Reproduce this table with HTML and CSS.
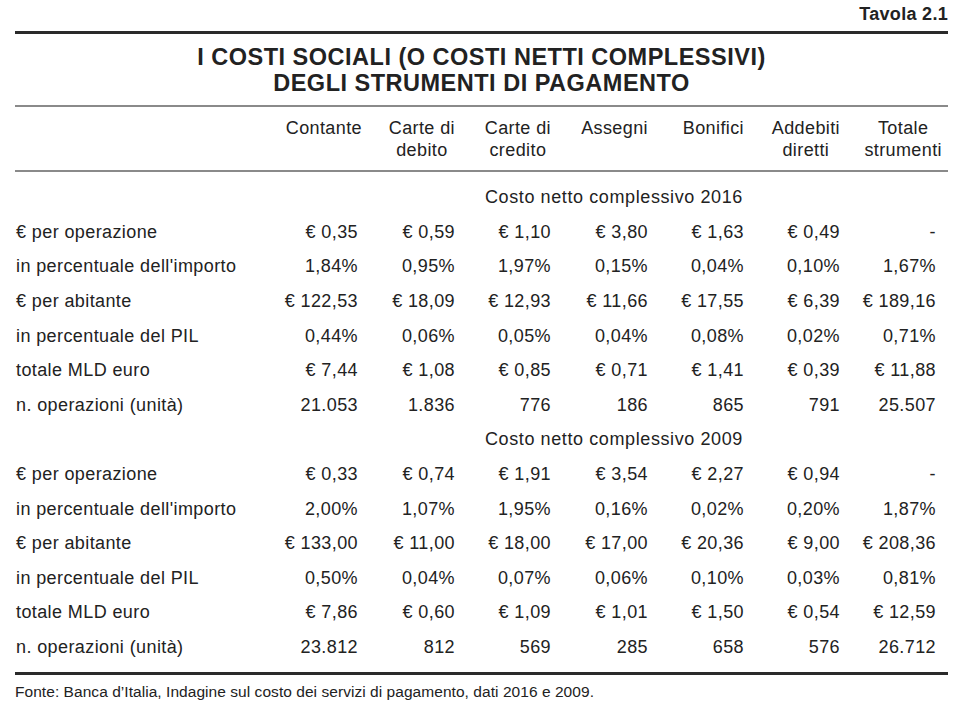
FILE: index.html
```html
<!DOCTYPE html>
<html lang="it">
<head>
<meta charset="utf-8">
<title>Tavola 2.1</title>
<link rel="stylesheet" href="styles.css">
</head>
<body>
<div class="page">
  <div class="tag">Tavola 2.1</div>
  <div class="rule-thick"></div>
  <h1 class="title">I COSTI SOCIALI (O COSTI NETTI COMPLESSIVI)<br>DEGLI STRUMENTI DI PAGAMENTO</h1>
  <div class="rule-thin"></div>
  <table class="data">
    <colgroup>
      <col class="c-label">
      <col class="c-num"><col class="c-num2"><col class="c-num"><col class="c-num2"><col class="c-num"><col class="c-num"><col class="c-last">
    </colgroup>
    <thead>
      <tr>
        <th></th>
        <th class="first"><span>Contante</span></th>
        <th><span>Carte di<br>debito</span></th>
        <th><span>Carte di<br>credito</span></th>
        <th><span>Assegni</span></th>
        <th><span>Bonifici</span></th>
        <th><span>Addebiti<br>diretti</span></th>
        <th class="last"><span>Totale<br>strumenti</span></th>
      </tr>
    </thead>
    <tbody>
      <tr class="gap"><td colspan="8"></td></tr>
      <tr class="section"><td></td><td colspan="7">Costo netto complessivo 2016</td></tr>
      <tr><td>€ per operazione</td><td>€ 0,35</td><td>€ 0,59</td><td>€ 1,10</td><td>€ 3,80</td><td>€ 1,63</td><td>€ 0,49</td><td class="last">-</td></tr>
      <tr><td>in percentuale dell'importo</td><td>1,84%</td><td>0,95%</td><td>1,97%</td><td>0,15%</td><td>0,04%</td><td>0,10%</td><td class="last">1,67%</td></tr>
      <tr><td>€ per abitante</td><td>€ 122,53</td><td>€ 18,09</td><td>€ 12,93</td><td>€ 11,66</td><td>€ 17,55</td><td>€ 6,39</td><td class="last">€ 189,16</td></tr>
      <tr><td>in percentuale del PIL</td><td>0,44%</td><td>0,06%</td><td>0,05%</td><td>0,04%</td><td>0,08%</td><td>0,02%</td><td class="last">0,71%</td></tr>
      <tr><td>totale MLD euro</td><td>€ 7,44</td><td>€ 1,08</td><td>€ 0,85</td><td>€ 0,71</td><td>€ 1,41</td><td>€ 0,39</td><td class="last">€ 11,88</td></tr>
      <tr><td>n. operazioni (unità)</td><td>21.053</td><td>1.836</td><td>776</td><td>186</td><td>865</td><td>791</td><td class="last">25.507</td></tr>
      <tr class="section"><td></td><td colspan="7">Costo netto complessivo 2009</td></tr>
      <tr><td>€ per operazione</td><td>€ 0,33</td><td>€ 0,74</td><td>€ 1,91</td><td>€ 3,54</td><td>€ 2,27</td><td>€ 0,94</td><td class="last">-</td></tr>
      <tr><td>in percentuale dell'importo</td><td>2,00%</td><td>1,07%</td><td>1,95%</td><td>0,16%</td><td>0,02%</td><td>0,20%</td><td class="last">1,87%</td></tr>
      <tr><td>€ per abitante</td><td>€ 133,00</td><td>€ 11,00</td><td>€ 18,00</td><td>€ 17,00</td><td>€ 20,36</td><td>€ 9,00</td><td class="last">€ 208,36</td></tr>
      <tr><td>in percentuale del PIL</td><td>0,50%</td><td>0,04%</td><td>0,07%</td><td>0,06%</td><td>0,10%</td><td>0,03%</td><td class="last">0,81%</td></tr>
      <tr><td>totale MLD euro</td><td>€ 7,86</td><td>€ 0,60</td><td>€ 1,09</td><td>€ 1,01</td><td>€ 1,50</td><td>€ 0,54</td><td class="last">€ 12,59</td></tr>
      <tr><td>n. operazioni (unità)</td><td>23.812</td><td>812</td><td>569</td><td>285</td><td>658</td><td>576</td><td class="last">26.712</td></tr>
    </tbody>
  </table>
  <div class="rule-bottom"></div>
  <p class="source">Fonte: Banca d’Italia, Indagine sul costo dei servizi di pagamento, dati 2016 e 2009.</p>
</div>
</body>
</html>
```
FILE: styles.css
```css
html, body {
  margin: 0;
  padding: 0;
  background: #ffffff;
}
body {
  font-family: "Liberation Sans", Arial, Helvetica, sans-serif;
  color: #222222;
}
.page {
  width: 933px;
  margin-left: 15px;
}
.tag {
  text-align: right;
  font-weight: bold;
  font-size: 18px;
  line-height: 20px;
  padding-top: 4px;
  height: 27px;
  letter-spacing: 0.3px;
}
.rule-thick {
  height: 3px;
  background: #2a2a2a;
}
.title {
  margin: 10px 0 0 0;
  text-align: center;
  font-size: 23.5px;
  line-height: 26px;
  font-weight: bold;
  letter-spacing: 0.5px;
  color: #222222;
  height: 61px;
}
.rule-thin {
  height: 2px;
  background: #8a8a8a;
}
.data {
  width: 933px;
  border-collapse: collapse;
  table-layout: fixed;
  font-size: 18px;
  letter-spacing: 0.4px;
}
.c-label { width: 247px; }
.c-num { width: 96px; }
.c-num2 { width: 97px; }
.c-last { width: 108px; }
.data th, .data td {
  padding: 0;
}
.data th {
  font-weight: normal;
  text-align: right;
  vertical-align: top;
  padding-top: 10px;
  padding-bottom: 9px;
  border-bottom: 2px solid #8a8a8a;
}
.data th span {
  display: inline-block;
  text-align: center;
  line-height: 22px;
}
.data th.first span {
  margin-right: -4px;
}
.data th.last, .data td.last {
  padding-right: 12px;
}
.data th.last span {
  margin-right: -6px;
}
.data td {
  height: 34.6px;
  line-height: 20px;
  text-align: right;
  vertical-align: middle;
  white-space: nowrap;
}
.data td:first-child {
  text-align: left;
  padding-left: 1px;
}
.data tr.gap td {
  height: 8px;
}
.data tr.section td {
  text-align: left;
  padding-left: 223px;
  letter-spacing: 0.6px;
}
.data tr.section td:first-child {
  padding-left: 0;
}
.rule-bottom {
  height: 3px;
  background: #2a2a2a;
  margin-top: 8px;
}
.source {
  margin: 9px 0 0 0;
  font-size: 15.5px;
  line-height: 16px;
  letter-spacing: 0.05px;
}
```
